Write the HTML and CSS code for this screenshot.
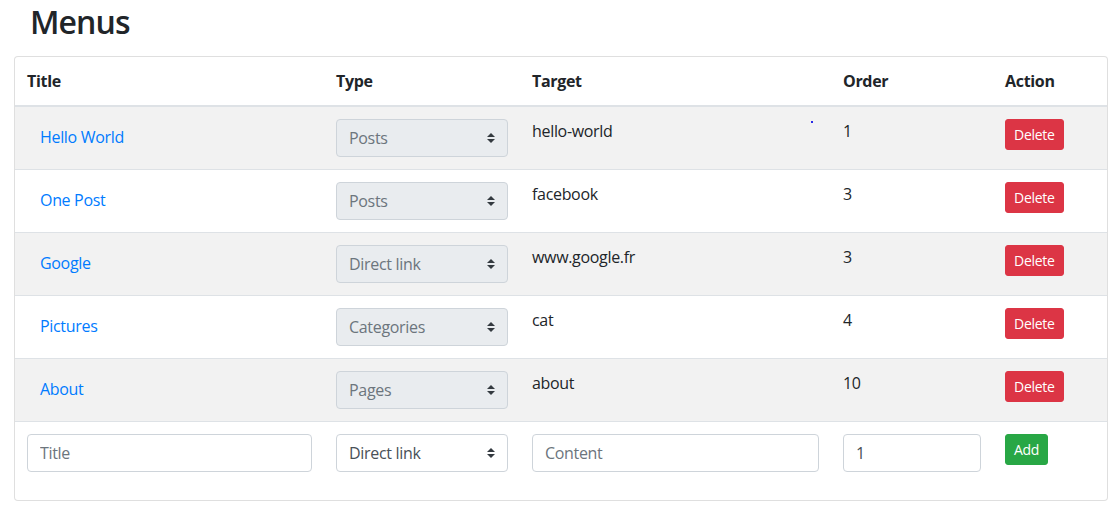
FILE: index.html
```html
<!DOCTYPE html>
<html lang="en">
<head>
<meta charset="utf-8">
<title>Menus</title>
<link rel="stylesheet" href="styles.css">
</head>
<body>
<div class="page">
  <h2 class="heading">Menus</h2>
  <div class="card">
    <table class="table">
      <colgroup>
        <col class="c-title"><col class="c-type"><col class="c-target"><col class="c-order"><col class="c-action">
      </colgroup>
      <thead>
        <tr><th>Title</th><th>Type</th><th>Target</th><th>Order</th><th>Action</th></tr>
      </thead>
      <tbody>
        <tr>
          <td><a class="btn-link" href="#">Hello World</a></td>
          <td><div class="sel"><select disabled><option>Posts</option></select><svg class="arrow" viewBox="0 0 4 5" width="8" height="10"><path d="M2 0L0 2h4zm0 5L0 3h4z" fill="#343a40"/></svg></div></td>
          <td class="target">hello-world<span class="dot"></span></td>
          <td>1</td>
          <td><button class="btn btn-danger">Delete</button></td>
        </tr>
        <tr>
          <td><a class="btn-link" href="#">One Post</a></td>
          <td><div class="sel"><select disabled><option>Posts</option></select><svg class="arrow" viewBox="0 0 4 5" width="8" height="10"><path d="M2 0L0 2h4zm0 5L0 3h4z" fill="#343a40"/></svg></div></td>
          <td>facebook</td>
          <td>3</td>
          <td><button class="btn btn-danger">Delete</button></td>
        </tr>
        <tr>
          <td><a class="btn-link" href="#">Google</a></td>
          <td><div class="sel"><select disabled><option>Direct link</option></select><svg class="arrow" viewBox="0 0 4 5" width="8" height="10"><path d="M2 0L0 2h4zm0 5L0 3h4z" fill="#343a40"/></svg></div></td>
          <td>www.google.fr</td>
          <td>3</td>
          <td><button class="btn btn-danger">Delete</button></td>
        </tr>
        <tr>
          <td><a class="btn-link" href="#">Pictures</a></td>
          <td><div class="sel"><select disabled><option>Categories</option></select><svg class="arrow" viewBox="0 0 4 5" width="8" height="10"><path d="M2 0L0 2h4zm0 5L0 3h4z" fill="#343a40"/></svg></div></td>
          <td>cat</td>
          <td>4</td>
          <td><button class="btn btn-danger">Delete</button></td>
        </tr>
        <tr>
          <td><a class="btn-link" href="#">About</a></td>
          <td><div class="sel"><select disabled><option>Pages</option></select><svg class="arrow" viewBox="0 0 4 5" width="8" height="10"><path d="M2 0L0 2h4zm0 5L0 3h4z" fill="#343a40"/></svg></div></td>
          <td>about</td>
          <td>10</td>
          <td><button class="btn btn-danger">Delete</button></td>
        </tr>
        <tr>
          <td><input class="input" type="text" placeholder="Title"></td>
          <td><div class="sel"><select class="enabled"><option>Direct link</option></select><svg class="arrow" viewBox="0 0 4 5" width="8" height="10"><path d="M2 0L0 2h4zm0 5L0 3h4z" fill="#343a40"/></svg></div></td>
          <td><input class="input" type="text" placeholder="Content"></td>
          <td><input class="input num" type="text" value="1"></td>
          <td><button class="btn btn-success">Add</button></td>
        </tr>
      </tbody>
    </table>
  </div>
</div>
</body>
</html>
```
FILE: styles.css
```css
* { box-sizing: border-box; }
body {
  margin: 0;
  background: #fff;
  color: #212529;
  font-family: "Open Sans", "Noto Sans", sans-serif;
  font-size: 16px;
  line-height: 1.5;
  letter-spacing: -0.02em;
}
.page {
  padding: 0 11px 0 14px;
}
.heading {
  margin: 3px 0 15px 16px;
  font-size: 32px;
  font-weight: 600;
  letter-spacing: -0.9px;
  line-height: 1.2;
}
.card {
  border: 1px solid rgba(0,0,0,.125);
  border-radius: 4px;
  background: #fff;
}
.table {
  width: 100%;
  border-collapse: collapse;
  table-layout: fixed;
  margin-bottom: 16px;
}
.c-title { width: 309px; }
.c-type { width: 196px; }
.c-target { width: 311px; }
.c-order { width: 162px; }
.c-action { width: 114px; }
.table th {
  text-align: left;
  font-weight: 700;
  padding: 12px;
  border-bottom: 2px solid #dee2e6;
  vertical-align: bottom;
}
.table td {
  padding: 12px;
  border-top: 1px solid #dee2e6;
  vertical-align: top;
}
.table thead + tbody tr:first-child td { border-top: 0; }
.table tbody tr:nth-of-type(odd) { background: rgba(0,0,0,.05); }
.btn-link {
  display: inline-block;
  padding: 6px 12px 6px 13px;
  color: #007bff;
  text-decoration: none;
  line-height: 24px;
}
.sel { position: relative; }
.sel select {
  display: block;
  width: 100%;
  height: 38px;
  padding: 6px 28px 6px 12px;
  font: inherit;
  letter-spacing: inherit;
  line-height: 24px;
  border: 1px solid #ced4da;
  border-radius: 4px;
  background: #e9ecef;
  color: #6c757d;
  appearance: none;
  -webkit-appearance: none;
  opacity: 1;
}
.sel select.enabled { background: #fff; color: #495057; }
.arrow {
  position: absolute;
  right: 13px;
  top: 14px;
  pointer-events: none;
}
.target { position: relative; }
.dot {
  position: absolute;
  left: 291px;
  top: 14px;
  width: 2px;
  height: 2px;
  background: #2a2ae6;
}
.input {
  display: block;
  width: 100%;
  height: 38px;
  padding: 6px 12px;
  font: inherit;
  letter-spacing: inherit;
  line-height: 24px;
  color: #495057;
  border: 1px solid #ced4da;
  border-radius: 4px;
  background: #fff;
}
.input::placeholder { color: #6c757d; opacity: 1; }
.btn {
  display: inline-block;
  padding: 4px 8px;
  font-family: inherit;
  font-size: 14px;
  letter-spacing: -0.02em;
  line-height: 21px;
  color: #fff;
  border: 1px solid transparent;
  border-radius: 3px;
  cursor: pointer;
}
.btn-danger { background: #dc3545; border-color: #dc3545; }
.btn-success { background: #28a745; border-color: #28a745; }
```
